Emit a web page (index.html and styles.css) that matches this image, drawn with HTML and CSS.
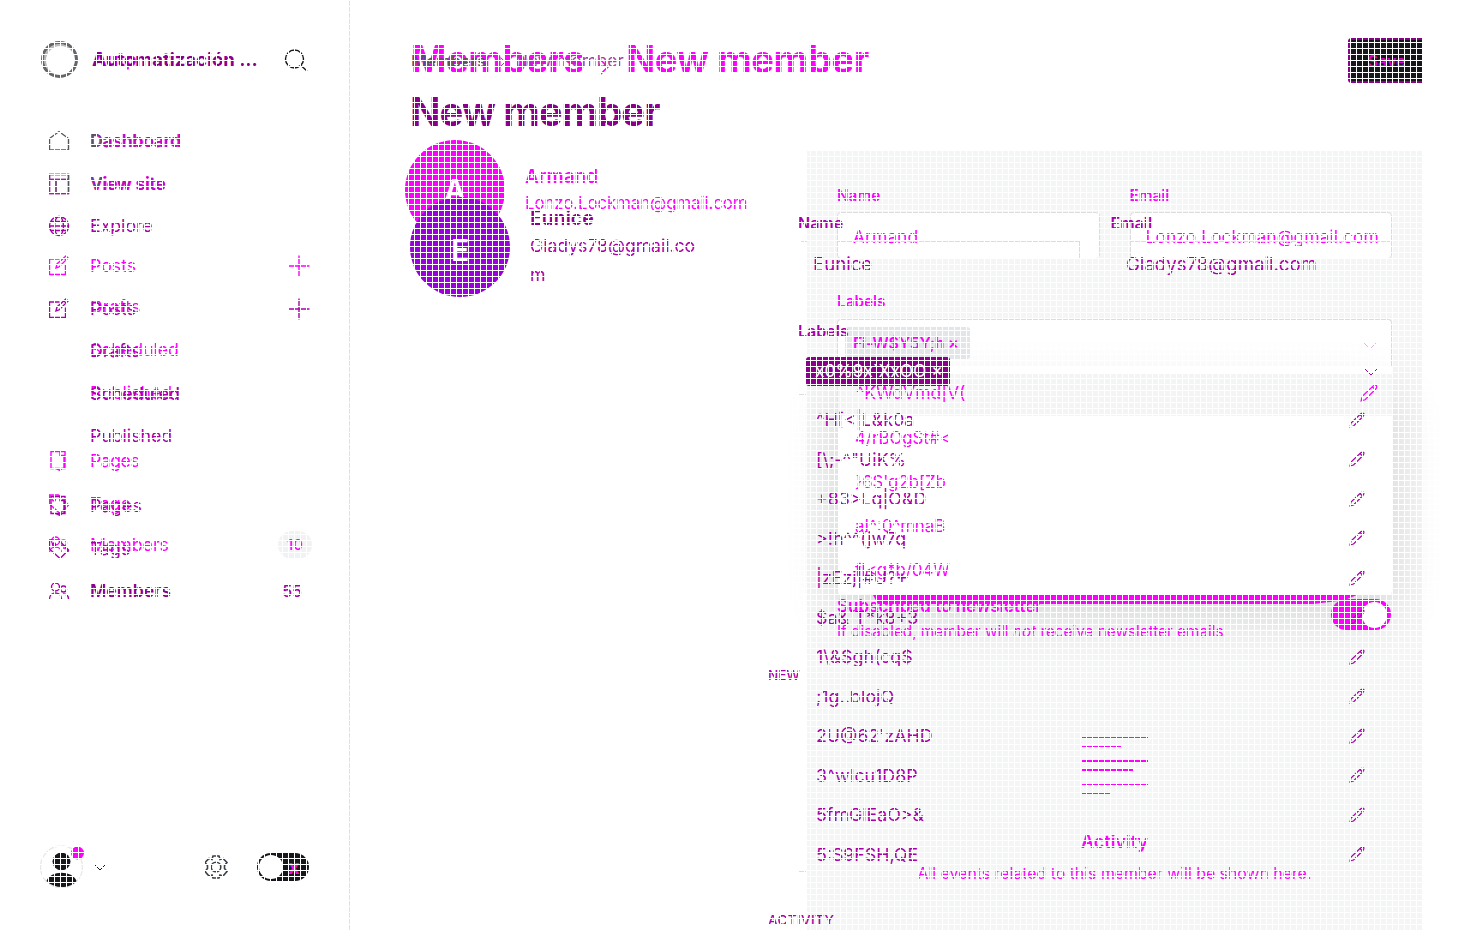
FILE: index.html
```
<!DOCTYPE html>
<html lang="en">
<head>
<meta charset="utf-8">
<title>New member</title>
<link rel="stylesheet" href="styles.css">
</head>
<body>
<svg class="defs" width="0" height="0">
  <symbol id="home" viewBox="0 0 22 22"><path d="M1.500 20V8.500L11 1.500l9.500 7V20Z"/></symbol>
  <symbol id="site" viewBox="0 0 22 22"><path d="M1.500 1.500h19v19h-19ZM1.500 6.500h19M8 6.500v14"/></symbol>
  <symbol id="globe" viewBox="0 0 22 22"><circle cx="11" cy="11" r="9.500"/><ellipse cx="11" cy="11" rx="4.500" ry="9.500"/><path d="M1.500 11h19M3 6.500h16M3 15.500h16"/></symbol>
  <symbol id="edit" viewBox="0 0 22 22"><path d="M11.500 4H1.500v15.500H17.500V9.500M8 13l1-4 9-8 2 2-9 9ZM16 3l2 2"/></symbol>
  <symbol id="page" viewBox="0 0 22 22"><path d="M3 1.500h14v17H3ZM12 1.500v4h4v13M8 18.500l4 2 2-2"/></symbol>
  <symbol id="tag" viewBox="0 0 22 22"><path d="M1.500 2h9l10 10-8.500 8.500L1.500 11Z"/><circle cx="6" cy="6.500" r="1.500"/></symbol>
  <symbol id="people" viewBox="0 0 22 22"><circle cx="7.500" cy="7" r="4"/><circle cx="15.500" cy="9" r="3"/><path d="M1.500 19c0-8 12-8 12 0M15 14c3.500 0 5.500 2 5.500 5"/></symbol>
  <symbol id="plus" viewBox="0 0 22 22"><path d="M11 .5v21M.5 11h21"/></symbol>
  <symbol id="pencil" viewBox="0 0 16 16"><path d="M1 15l1-4L11.500 2Q13.500 .500 14.800 1.500Q15.200 3 14 4.500L4.500 14ZM11 2.500l2.500 2.500"/></symbol>
  <symbol id="chevron" viewBox="0 0 14 8"><path d="M1 1l6 6 6-6"/></symbol>
</svg>
<div class="stage">
  <div class="layer prev">
    <aside class="side">
      <div class="brand"><span class="brand-name under">Autp</span></div>
      <nav class="nav">
        <div class="item"><span class="tight">Dashboard</span></div>
        <div class="item m13"><svg class="ic"><use href="#site"/></svg><span class="tight">View site</span></div>
        <div class="item m52"><svg class="ic"><use href="#edit"/></svg><span>Posts</span><svg class="add"><use href="#plus"/></svg></div>
        <div class="item m11"><span class="sub">Drafts</span></div>
        <div class="item m13"><span class="sub">Scheduled</span></div>
        <div class="item m13"><span class="sub">Published</span></div>
        <div class="item m38"><svg class="ic"><use href="#page"/></svg><span class="short">Pages</span></div>
        <div class="item m13"><svg class="ic"><use href="#tag"/></svg><span>Tags</span></div>
        <div class="item m11"><svg class="ic"><use href="#people"/></svg><span>Members</span><b class="badge">10</b></div>
      </nav>
    </aside>
    <main class="main">
      <header class="head"><h1>Members<svg class="sep"><use href="#chevron"/></svg>New member</h1><button class="save">Save</button></header>
      <div class="body">
        <div class="avatar">A</div>
        <div class="who"><strong>Armand</strong><span>Lonzo.Lockman@gmail.com</span></div>
        <section class="panel">
          <div class="fields">
            <label>Name<span class="input">Armand</span></label>
            <label>Email<span class="input">Lonzo.Lockman@gmail.com</span></label>
          </div>
          <div class="label labels">Labels</div>
          <div class="select"><span class="chip">Fi-W$Y5Y;h <i>×</i></span><svg class="chev"><use href="#chevron"/></svg></div>
          <div class="select-edge"></div>
          <ul class="drop">
            <li><span>^KWdVmd|V(</span><svg><use href="#pencil"/></svg></li>
            <li>4/rBOgSt#&lt;</li><li>}6S'g2b[Zb</li><li>aI^:0^mnaB</li><li>fI&lt;g*b/04W</li>
          </ul>
          <div class="bar"></div>
          <div class="news"><div><strong>Subscribed to newsletter</strong><p>If disabled, member will <em>not</em> receive newsletter emails</p></div><span class="switch"><i></i></span></div>
          <div class="empty">
            <div class="lines"><i></i><i></i><i></i><i></i><i></i><i></i></div>
            <h2>Activity</h2>
            <p>All events related to this member will be shown here.</p>
          </div>
        </section>
      </div>
    </main>
  </div>

  <div class="layer next">
    <aside class="side">
      <div class="brand"><span class="logo"></span><span class="brand-name">Automatización ...</span>
        <svg class="search" viewBox="0 0 24 24"><circle cx="10.500" cy="10" r="9"/><path d="M17 16.500l6 5.500"/></svg></div>
      <nav class="nav">
        <div class="item dark"><svg class="ic"><use href="#home"/></svg><span class="first">Dashboard</span></div>
        <div class="item m13 dark"><svg class="ic"><use href="#site"/></svg><span class="first">View site</span></div>
        <div class="item m12"><svg class="ic"><use href="#globe"/></svg><span>Explore</span></div>
        <div class="item m53"><svg class="ic"><use href="#edit"/></svg><span>Posts</span><svg class="add"><use href="#plus"/></svg></div>
        <div class="item m12"><span class="sub">Drafts</span></div>
        <div class="item m13"><span class="sub strong">Scheduled</span></div>
        <div class="item m12"><span class="sub">Published</span></div>
        <div class="item m40"><svg class="ic"><use href="#page"/></svg><span>Pages</span></div>
        <div class="item m13"><svg class="ic"><use href="#tag"/></svg><span>Tags</span></div>
        <div class="item m12"><svg class="ic"><use href="#people"/></svg><span class="current">Members</span><b class="count">55</b></div>
      </nav>
      <footer class="foot">
        <svg class="user" viewBox="0 0 44 44"><circle cx="21.500" cy="22" r="21" fill="#fff" stroke="#e9e9ea"/><circle cx="21.500" cy="16.500" r="9"/><path d="M6.500 36c4-11 26-11 30 0-7 8-22 8-30 0Z"/><circle cx="37.500" cy="8" r="6.500" fill="#f0f"/></svg>
        <svg class="caret"><use href="#chevron"/></svg>
        <svg class="gear" viewBox="0 0 26 26"><circle cx="13" cy="13" r="4.800"/><path d="M10 2h6l1 3.500 3-1 4 4-2.500 3v3l2.500 3-4 4.500-3-1-1 3h-6l-1-3-3 1-4-4.500 2.500-3v-3L2 8.500l4-4 3 1Z"/></svg>
        <span class="night"><i></i><b>x</b></span>
      </footer>
    </aside>
    <div class="intro">
      <div class="crumbs">Members <svg class="tiny"><use href="#chevron"/></svg> <span>New member</span></div>
      <h1>New member</h1>
      <div class="profile"><div class="avatar">E</div><div class="who"><strong>Eunice</strong><span>Gladys78@gmail.co<br>m</span></div></div>
    </div>
    <div class="tabs"><span>NEW</span><span>ACTIVITY</span></div>
    <section class="form">
      <div class="heads"><span>Name</span><span>Email</span></div>
      <div class="rules"><i></i><i></i><i></i></div>
      <div class="values"><span>Eunice</span><span>Gladys78@gmail.com</span></div>
      <div class="heads labels">Labels</div>
      <div class="picked"><span class="chip">x0%9x`XxOO <i>×</i></span><svg class="chev"><use href="#chevron"/></svg></div>
      <div class="tick"></div>
      <ul class="list">
        <li><span>^H[&lt;|L&amp;k0a</span><svg><use href="#pencil"/></svg></li>
        <li><span>[\;-^"UiK%</span><svg><use href="#pencil"/></svg></li>
        <li><span>+83&gt;Lq|O&amp;D</span><svg><use href="#pencil"/></svg></li>
        <li><span>&gt;!h^^(jw7q</span><svg><use href="#pencil"/></svg></li>
        <li><span>|zEzj|#U?+</span><svg><use href="#pencil"/></svg></li>
        <li><span>$a&amp;`T*k8+3</span><svg><use href="#pencil"/></svg></li>
        <li><span>1\&amp;$gh(cq$</span><svg><use href="#pencil"/></svg></li>
        <li><span>;1g..bIojQ</span><svg><use href="#pencil"/></svg></li>
        <li><span>2U@62'zAHD</span><svg><use href="#pencil"/></svg></li>
        <li><span>3^wIcu1D8P</span><svg><use href="#pencil"/></svg></li>
        <li><span>5fmGlEaO&gt;&amp;</span><svg><use href="#pencil"/></svg></li>
        <li><span>5:S9FSH,QE</span><svg><use href="#pencil"/></svg></li>
      </ul>
      <div class="tick last"></div>
    </section>
    <div class="save-wrap"><span class="save">Save</span></div>
  </div>
  <div class="mesh"></div>
</div>
</body>
</html>
```
FILE: styles.css
```
* { box-sizing: border-box; margin: 0; padding: 0; }
body { background: #fff; font-family: Inter, "Liberation Sans", sans-serif; font-size: 18px; overflow: hidden; }
svg { fill: none; stroke: currentColor; stroke-width: 1.4; display: block; flex: none; }
ul { list-style: none; }
i { font-style: normal; }
.defs { display: none; }

/* both revisions share one grid cell, the mesh lies on top */
.stage { display: grid; width: 1483px; height: 931px; overflow: hidden; }
.layer, .mesh { grid-area: 1 / 1; min-width: 0; height: 931px; }
.layer { display: flex; overflow: hidden; white-space: nowrap; }
.mesh {
  z-index: 5;
  background:
    repeating-linear-gradient(90deg, #fff 0 1px, transparent 1px 6px),
    repeating-linear-gradient(180deg, #fff 0 1px, transparent 1px 6px);
}
.prev { color: #f0f; }
.next { color: #a800a8; z-index: 2; }

/* sidebar */
.side { width: 350px; flex: none; border-right: 1px solid #e0e1e3; padding-left: 41px; display: flex; flex-direction: column; }
.brand { height: 125.500px; display: flex; align-items: flex-start; padding-top: 41px; }
.logo { width: 37px; height: 37px; border-radius: 50%; border: 3px solid #66666a; box-shadow: inset 1px 1px 0 1px #bbb; }
.brand-name { margin-left: 14px; line-height: 37px; font-weight: 700; font-size: 18.500px; color: #8b008b; width: 180px; }
.brand-name.under { margin-left: 52px; color: #f0f; }
.search { width: 24px; height: 24px; color: #15171a; margin: 8px 0 0 12px; }
.item { height: 30px; display: flex; align-items: center; padding-left: 7px; font-size: 17.700px; }
.item span { margin-left: 20px; }
.item > span:first-child { margin-left: 42px; }
.item .tight { font-weight: 700; letter-spacing: -.4px; }
.item .short { letter-spacing: -.5px; }
.dark { color: #53575c; }
.dark .first { color: #b010b0; }
.dark .first::first-letter { color: #53575c; }
.first { display: block; }
.strong { font-weight: 500; }
.current { font-weight: 600; color: #8b008b; }
.ic { width: 22px; height: 22px; }
.add { width: 22px; height: 22px; margin: 0 39px 0 auto; }
.badge { margin: 0 37px 0 auto; width: 34px; height: 28px; border-radius: 14px; background: #f1f2f4; text-align: center; font: 500 15px/28px Inter, sans-serif; }
.count { margin: 0 47px 0 auto; font-weight: 500; font-size: 16px; }
.m11 { margin-top: 11px; } .m12 { margin-top: 12px; } .m13 { margin-top: 13px; }
.m38 { margin-top: 38px; } .m40 { margin-top: 40px; } .m52 { margin-top: 52px; } .m53 { margin-top: 53px; }
.foot { margin-top: 239.500px; margin-left: -1px; display: flex; align-items: center; height: 44px; }
.user { width: 44px; height: 44px; fill: #15171a; stroke: none; }
.caret { width: 14px; height: 8px; color: #15171a; margin-left: 9px; stroke-width: 1; }
.gear { width: 26px; height: 26px; margin-left: 96px; color: #394047; stroke-width: 1.600; }
.night { width: 52px; height: 28px; border-radius: 14px; background: #15171a; margin-left: 28px; padding: 2px; display: flex; align-items: center; color: #f0f; }
.night i { width: 24px; height: 24px; border-radius: 50%; background: #fff; }
.night b { margin-left: 5px; font-size: 20px; line-height: 20px; }

/* earlier revision */
.main { width: 1133px; flex: none; }
.head { height: 140px; display: flex; align-items: flex-start; justify-content: space-between; padding: 38px 61px 0 61px; }
h1 { font-weight: 700; }
.head h1 { font-size: 38px; line-height: 42px; letter-spacing: -.4px; display: flex; align-items: center; }
.sep { width: 20px; height: 10px; transform: rotate(-90deg); margin: 16px 12px 0 10px; }
.save { width: 74px; height: 45px; border: 0; border-radius: 4px 0 0 4px; background: #f0f; color: #f0f; font: 600 16px/44px Inter, sans-serif; text-align: center; }
.body { display: flex; padding-left: 55px; }
.avatar { width: 100px; height: 100px; flex: none; border-radius: 50%; background: #f0f; color: #fff; font-weight: 600; font-size: 30px; line-height: 100px; text-align: center; }
.who { display: flex; flex-direction: column; flex: none; }
.prev .who { width: 302px; padding: 24px 0 0 20px; }
.who strong { font-size: 19.500px; line-height: 26px; font-weight: 600; }
.prev .who strong { font-size: 19px; }
.who span { font-size: 17.600px; line-height: 26px; }
.prev .who span { font-size: 16.700px; }
.panel { width: 615px; height: 780px; margin-top: 11px; background: #f4f6f6; padding: 34px 30px 0; flex: none; }
.fields { display: flex; gap: 30px; }
.fields label, .label { font-size: 15.300px; font-weight: 600; line-height: 21px; width: 263px; }
.input { display: block; margin-top: 6px; height: 47px; border: 1px solid #dcdcdc; border-radius: 4px; background: #fff; padding-left: 15px; font-size: 17.500px; font-weight: 400; line-height: 48px; }
.label.labels { margin-top: 32px; }
.select { margin-top: 7px; height: 47px; border: 1px solid #dcdcdc; border-bottom: 0; border-radius: 4px 4px 0 0; background: #fff; display: flex; justify-content: space-between; padding: 7px 14px 0 7px; }
.chip { border-radius: 3px; }
.prev .chip { width: 125px; height: 32px; background: #e3e6e9; font-size: 16px; font-weight: 600; letter-spacing: -.3px; line-height: 32px; padding-left: 8px; }
.chev { width: 14px; height: 8px; margin-top: 15px; stroke-width: 1; }
.prev .chev { color: #e6b0e6; }
.select-edge { height: 8px; background: #fff; position: relative; z-index: 1; }
.drop { height: 221px; background: #fff; border-left: 1px solid #e4e4e4; border-radius: 0 0 4px 4px; box-shadow: 0 18px 54px rgba(0, 0, 0, .14); line-height: 44px; font-size: 16.800px; }
.drop li { height: 44px; padding-left: 17px; }
.drop li:first-child { height: 42px; line-height: 38px; font-size: 17.500px; background: #f3f5f5; display: flex; justify-content: space-between; padding: 0 14px 0 18px; }
.drop svg { width: 18px; height: 18px; margin-top: 10px; stroke-width: 1.100; }
.bar { position: relative; width: 484px; height: 9px; margin: 0 0 -9px 36px; background: #f0f; clip-path: polygon(0 0, 100% 0, 98% 4px, 96% 6px, 91% 9px, 1% 9px); }
.news { position: relative; display: flex; justify-content: space-between; height: 48px; }
.news strong { display: block; font-size: 17px; font-weight: 600; line-height: 23px; }
.news p { font-size: 15.300px; line-height: 27px; }
.switch { width: 60px; height: 31px; margin: 4px 1px 0 0; border-radius: 16px; background: #f0f; padding: 3px 4px; display: flex; justify-content: flex-end; }
.switch i { width: 25px; height: 26px; border-radius: 50%; background: #fff; }
.empty { display: flex; flex-direction: column; align-items: center; padding-top: 94px; }
.lines { width: 66px; height: 60px; }
.lines i { display: block; height: 1px; background: #f0f; }
.lines i:nth-child(2) { width: 39px; margin-top: 8px; }
.lines i:nth-child(3) { height: 2px; margin-top: 13px; }
.lines i:nth-child(4) { width: 51px; height: 2px; margin-top: 7px; }
.lines i:nth-child(5) { margin-top: 13px; }
.lines i:nth-child(6) { width: 28px; margin-top: 8px; }
.empty h2 { font-size: 18px; line-height: 24px; font-weight: 600; margin-top: 33px; }
.empty p { font-size: 15.850px; line-height: 24px; margin-top: 8px; }

/* later revision */
.intro { width: 418px; flex: none; padding: 49px 0 0 60px; }
.crumbs { font-size: 16.600px; line-height: 24px; font-weight: 500; color: #555; display: flex; padding-left: 1px; }
.crumbs span { font-size: 17.200px; color: #a040a0; font-weight: 400; }
.tiny { width: 10px; height: 6px; transform: rotate(-90deg); margin: 10px 7px 0 12px; }
.intro h1 { font-size: 40px; line-height: 50px; letter-spacing: -1px; color: #8b008b; margin-top: 14px; }
.profile { display: flex; margin-top: 60px; }
.next .avatar { background: #9a00dc; line-height: 106px; }
.next .who { padding: 8px 0 0 20px; }
.next .who strong { color: #8b008b; }
.next .who span { line-height: 29px; }
.tabs { width: 30px; flex: none; padding-top: 665px; font-size: 13.500px; line-height: 20px; font-weight: 500; }
.tabs span { display: block; }
.tabs span + span { margin-top: 225px; letter-spacing: .4px; }
.form { width: 625px; flex: none; padding-top: 213px; }
.heads { font-size: 16px; font-weight: 600; line-height: 20px; display: flex; }
.heads span { width: 312.500px; flex: none; }
.rules { display: flex; height: 14px; margin-top: 8px; }
.rules i { height: 17px; border-top: 1px solid #dcdcdc; flex: none; }
.rules i:nth-child(1) { width: 6px; margin-left: 3px; }
.rules i:nth-child(2) { width: 243px; margin-left: 30px; border-right: 1px solid #dcdcdc; }
.rules i:nth-child(3) { width: 260px; margin-left: 50px; }
.values { display: flex; line-height: 18px; padding: 0 0 2px 15px; font-size: 18.600px; }
.values span { width: 313px; flex: none; }
.heads.labels { margin-top: 46px; }
.picked { display: flex; justify-content: space-between; margin-top: 16px; padding: 0 45px 0 8px; height: 29px; }
.next .chip { width: 144px; background: #8b008b; color: #fff; font-size: 17.400px; line-height: 27px; padding-left: 9px; }
.picked .chev { margin-top: 11px; }
.tick { width: 8px; height: 6px; margin-top: 8px; border-top: 1px solid #ddd; }
.tick.last { margin-top: -3px; }
.list li { height: 39.500px; display: flex; align-items: center; justify-content: space-between; padding: 0 58px 0 18px; font-size: 17.800px; }
.list svg { width: 16px; height: 16px; stroke-width: 1.200; }
.save-wrap { flex: none; width: 74px; margin-left: -75px; padding-top: 38px; }
.next .save { display: block; height: 45px; background: #15171a; border: solid #8b008b; border-width: 2px 0 2px 3px; color: #e000e0; line-height: 42px; }
```
